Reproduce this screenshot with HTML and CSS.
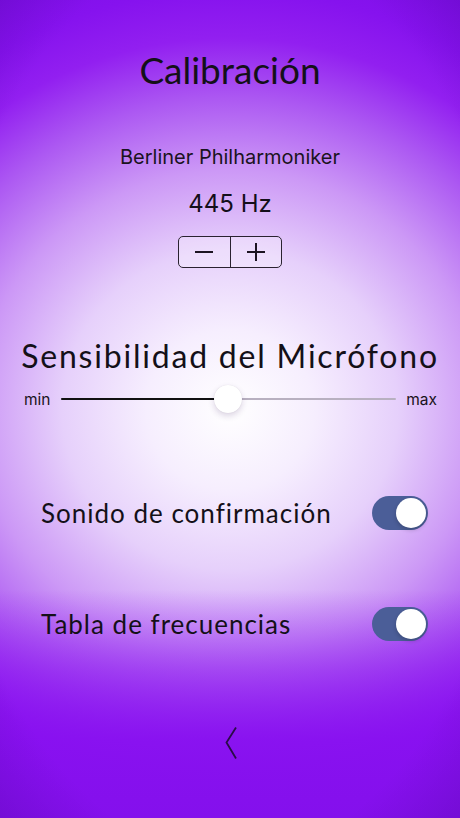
FILE: index.html
```html
<!DOCTYPE html>
<html lang="es">
<head>
<meta charset="utf-8">
<title>Calibración</title>
<link rel="stylesheet" href="styles.css">
</head>
<body>
<main class="screen">
  <h1 class="title">Calibración</h1>
  <p class="orchestra">Berliner Philharmoniker</p>
  <p class="freq">445 Hz</p>
  <div class="stepper">
    <button class="step minus" aria-label="menos"><span class="bar"></span></button>
    <button class="step plus" aria-label="más"><span class="bar"></span><span class="bar vert"></span></button>
  </div>
  <h2 class="section">Sensibilidad del Micrófono</h2>
  <div class="slider-row">
    <span class="lim">min</span>
    <div class="slider">
      <div class="fill" style="width: 50%"></div>
      <div class="thumb" style="left: 50%"></div>
    </div>
    <span class="lim">max</span>
  </div>
  <div class="toggle-row first">
    <span class="label">Sonido de confirmación</span>
    <span class="switch on"><span class="knob"></span></span>
  </div>
  <div class="toggle-row second">
    <span class="label">Tabla de frecuencias</span>
    <span class="switch on"><span class="knob"></span></span>
  </div>
  <div class="back">
    <svg width="14" height="34" viewBox="0 0 14 34"><polyline points="11,1.5 1.5,16.5 11,32.5" fill="none" stroke="#2a0c48" stroke-width="1.8" stroke-linejoin="miter"/></svg>
  </div>
</main>
</body>
</html>
```
FILE: styles.css
```css
html, body {
  margin: 0;
  padding: 0;
}
body {
  width: 460px;
  height: 818px;
  overflow: hidden;
  background:
    radial-gradient(ellipse 300px 480px at 230px 400px, rgba(60, 0, 130, 0) 95%, rgba(60, 0, 130, 0.35) 130%),
    linear-gradient(180deg, rgba(138, 18, 240, 0) 590px, rgba(138, 18, 240, 0.55) 670px, rgba(136, 16, 240, 0.95) 740px, #8410ec 818px),
    radial-gradient(ellipse 420px 400px at 230px 410px,
      #ffffff 0%,
      #f6eefe 20%,
      #e6d0fb 40%,
      #cc98f6 60%,
      #ac58f2 78%,
      #921ff0 93%,
      #8612ee 105%,
      #7a0ce4 125%);
}
.screen {
  display: flex;
  flex-direction: column;
  align-items: center;
  height: 818px;
  color: #111;
}
.title {
  margin: 48px 0 0;
  font-family: Lato, "Open Sans", sans-serif;
  font-weight: 400;
  font-size: 37px;
  line-height: 44px;
  color: #141018;
}
.orchestra {
  margin: 53px 0 0;
  font-family: Inter, Roboto, sans-serif;
  font-size: 20px;
  line-height: 24px;
  color: #1a1320;
}
.freq {
  margin: 20px 0 0;
  font-family: Inter, Roboto, sans-serif;
  font-size: 24px;
  line-height: 30px;
  color: #140e1a;
}
.stepper {
  margin-top: 17px;
  display: flex;
  width: 102px;
  height: 30px;
  border: 1.3px solid #2a2230;
  border-radius: 5px;
  background: rgba(255, 255, 255, 0.28);
  overflow: hidden;
}
.step {
  flex: 1;
  position: relative;
  border: 0;
  padding: 0;
  background: transparent;
}
.step.plus {
  border-left: 1.3px solid #2a2230;
}
.bar {
  position: absolute;
  left: 50%;
  top: 50%;
  width: 18px;
  height: 2px;
  margin: -1px 0 0 -9px;
  background: #1c1422;
}
.bar.vert {
  width: 2px;
  height: 18px;
  margin: -9px 0 0 -1px;
}
.section {
  margin: 69px 0 0;
  font-family: Lato, "Open Sans", sans-serif;
  font-weight: 400;
  font-size: 32px;
  letter-spacing: 1.8px;
  line-height: 38px;
  color: #141018;
}
.slider-row {
  margin-top: 10px;
  align-self: stretch;
  display: flex;
  align-items: center;
  height: 28px;
  padding: 0 23px 0 24px;
  gap: 10px;
  font-family: Inter, Roboto, sans-serif;
  font-size: 15.5px;
  color: #1a1320;
}
.slider {
  flex: 1;
  position: relative;
  height: 2px;
  background: #b8b0c0;
  border-radius: 1px;
}
.fill {
  height: 2.5px;
  margin-top: -0.25px;
  background: #111;
  border-radius: 1px;
}
.thumb {
  position: absolute;
  top: 50%;
  width: 28px;
  height: 28px;
  margin: -14px 0 0 -14px;
  border-radius: 50%;
  background: #fff;
  box-shadow: 0 3px 6px rgba(60, 20, 100, 0.18), 0 0 1px rgba(0, 0, 0, 0.12);
}
.toggle-row {
  align-self: stretch;
  display: flex;
  align-items: center;
  justify-content: space-between;
  height: 34px;
  padding: 0 32px 0 41px;
}
.toggle-row.first {
  margin-top: 83px;
}
.toggle-row.second {
  margin-top: 77px;
}
.label {
  font-family: Lato, "Open Sans", sans-serif;
  font-size: 26px;
  letter-spacing: 1px;
  color: #141018;
}
.switch {
  position: relative;
  width: 56px;
  height: 34px;
  border-radius: 17px;
  background: #4b5e98;
}
.knob {
  position: absolute;
  right: 2px;
  top: 2px;
  width: 30px;
  height: 30px;
  border-radius: 50%;
  background: #fff;
  box-shadow: 0 2px 4px rgba(0, 0, 0, 0.2);
}
.back {
  margin-top: 85px;
  margin-left: 4px;
  height: 34px;
}
.back svg {
  display: block;
}
```
